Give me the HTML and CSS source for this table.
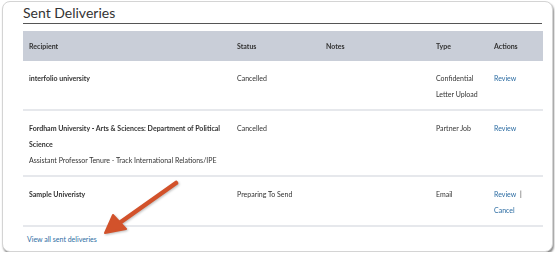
FILE: index.html
```html
<!DOCTYPE html>
<html>
<head>
<link rel="stylesheet" href="styles.css">
</head>
<body>

<div class="card">
  <h2 class="card_title">Sent Deliveries</h2>

  <table class="deliveries">
    <thead>
      <tr>
        <th class="col_recipient">Recipient</th>
        <th class="col_status">Status</th>
        <th class="col_notes">Notes</th>
        <th class="col_type">Type</th>
        <th class="col_actions">Actions</th>
      </tr>
    </thead>
    <tbody>
      <tr>
        <td><b>interfolio university</b></td>
        <td>Cancelled</td>
        <td></td>
        <td>Confidential Letter Upload</td>
        <td><a href="#">Review</a></td>
      </tr>
      <tr>
        <td><b>Fordham University - Arts &amp; Sciences: Department of Political Science</b><br>
          Assistant Professor Tenure - Track International Relations/IPE</td>
        <td>Cancelled</td>
        <td></td>
        <td>Partner Job</td>
        <td><a href="#">Review</a></td>
      </tr>
      <tr>
        <td><b>Sample Univeristy</b></td>
        <td>Preparing To Send</td>
        <td></td>
        <td>Email</td>
        <td><a href="#">Review</a> <span class="sep">|</span> <a href="#">Cancel</a></td>
      </tr>
    </tbody>
  </table>

  <div class="view_all">
    <a href="#">View all sent deliveries</a>
  </div>

  <!-- callout arrow pointing at the link -->
  <svg class="callout" width="551" height="252" viewBox="0 0 551 252">
    <g fill="#d2522b" stroke="#d2522b" stroke-linecap="round" stroke-linejoin="round">
      <line x1="173" y1="181" x2="115" y2="222" stroke-width="4.5"/>
      <polygon points="102,231 110,213 123,227" stroke-width="2"/>
    </g>
  </svg>
</div>

</body>
</html>
```

FILE: styles.css
```css
body {
  margin: 0;
  background-color: #ffffff;
  font-family: Lato, "Open Sans", sans-serif;
  color: #333333;
}

.card {
  position: relative;
  width: 551px;
  height: 251px;
  margin: 1px 0 0 2px;
  padding: 0 10px 0 20px;
  box-sizing: border-box;
  border: 1px solid #d4d4d4;
  border-radius: 8px;
  box-shadow: 1px 2px 2px rgba(0, 0, 0, 0.45);
  background-color: #ffffff;
}

.card_title {
  margin: 0;
  padding: 2px 0 2px 0;
  font-size: 14px;
  font-weight: normal;
  line-height: 17px;
  color: #333333;
  border-bottom: 1px solid #555555;
}

.deliveries {
  width: 520px;
  margin-top: 7px;
  border-collapse: collapse;
  font-size: 7px;
  line-height: 16px;
  color: #333333;
  will-change: transform; /* keeps the tiny text grey-smoothed */
}

.deliveries th {
  background-color: #c9ced8;
  text-align: left;
  font-weight: bold;
  height: 30px;
  padding: 0 6px;
  vertical-align: middle;
  color: #333333;
}

.deliveries td {
  padding: 9px 6px 7px 6px;
  vertical-align: top;
  border-bottom: 2px solid #e6e8ec;
  color: #333333;
}

.col_recipient { width: 196px; }
.col_status { width: 77px; }
.col_notes { width: 98px; }
.col_type { width: 46px; }

.deliveries a,
.view_all a {
  color: #2d6da3;
  text-decoration: none;
}

.sep {
  color: #333333;
  margin-left: 2px;
}

.view_all {
  padding: 6px 4px;
  font-size: 7px;
  line-height: 12px;
}

.callout {
  position: absolute;
  left: 0;
  top: 0;
  filter: drop-shadow(1px 1px 1px rgba(0, 0, 0, 0.25));
}
```
